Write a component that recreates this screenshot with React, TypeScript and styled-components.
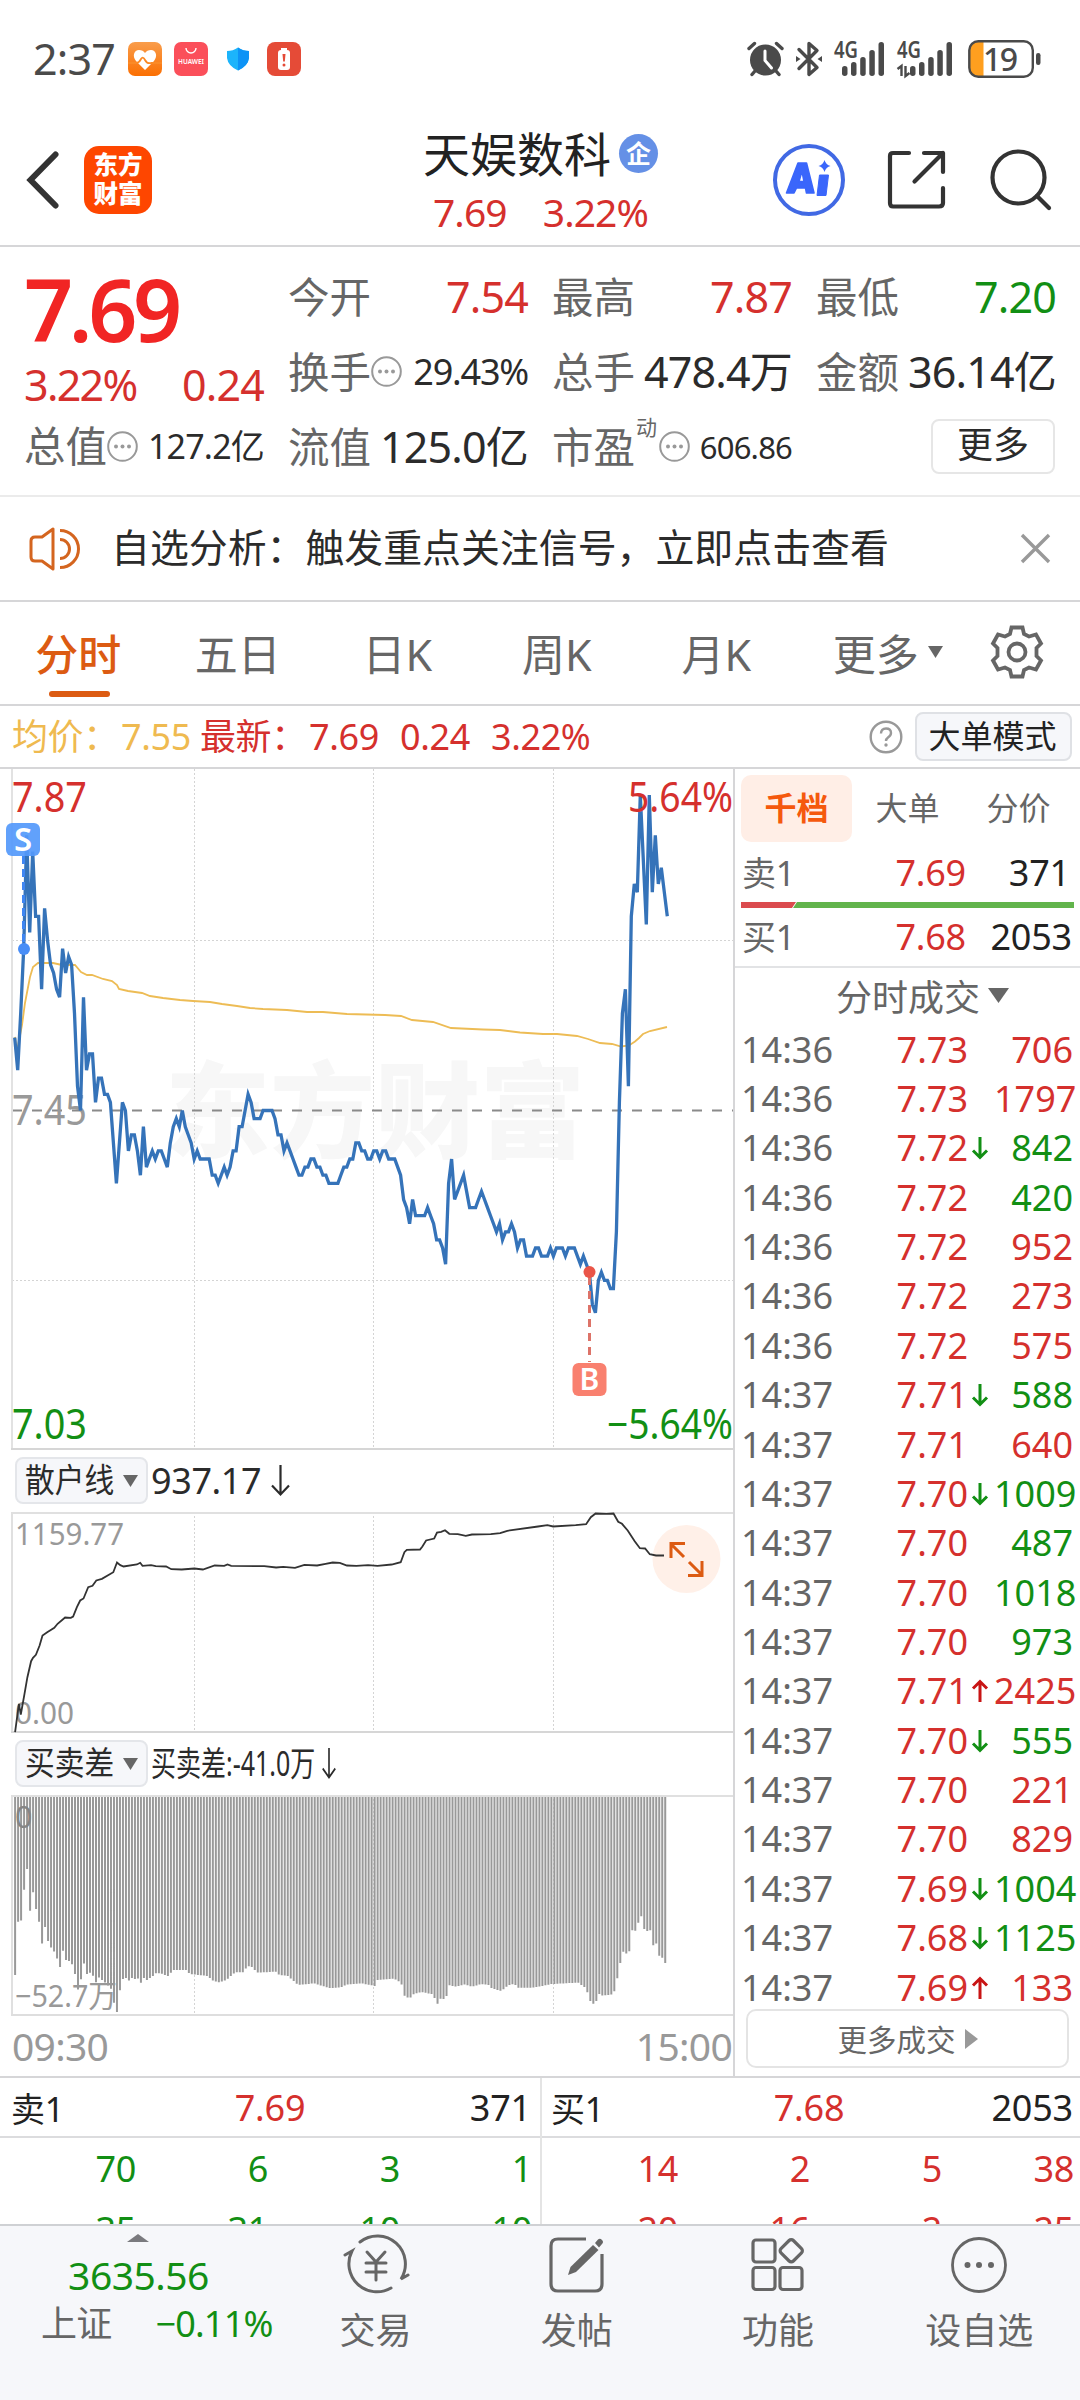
import React from "react";
import styled, { createGlobalStyle } from "styled-components";

const RED = "#d5302d";
const GREEN = "#128f14";
const INK = "#2b2b2b";
const GREY = "#666666";
const MUTE = "#999999";
const LINE = "#d6d6d8";
const BLUE = "#3573b9";
const ORANGE = "#dc5b12";

const FONT = '"Noto Sans", "Noto Sans CJK SC", sans-serif';

const Global = createGlobalStyle`
  * { box-sizing: border-box; }
  html, body { margin: 0; padding: 0; background: #fff; }
  body { font-family: ${FONT}; color: ${INK}; width: 1080px; }
  svg { display: block; flex: none; overflow: visible; }
  svg text { font-family: ${FONT}; }
`;

const Screen = styled.div`
  width: 1080px;
  height: 2400px;
  overflow: hidden;
  display: flex;
  flex-direction: column;
  background: #fff;
  white-space: nowrap;
`;

/* ---------- status bar ---------- */
const StatusBar = styled.div`
  height: 118px;
  flex: none;
  display: flex;
  justify-content: space-between;
  padding: 0 38px 0 33px;
`;
const StatusSide = styled.div<{ $gap: number }>`
  display: flex;
  align-items: center;
  gap: ${(p) => p.$gap}px;
`;
const Clock = styled.span`
  font-size: 43px;
  line-height: 60px;
  letter-spacing: -0.8px;
  color: #4a4a4a;
`;

/* ---------- header ---------- */
const Header = styled.header`
  height: 129px;
  flex: none;
  display: flex;
  border-bottom: 2px solid ${LINE};
  justify-content: space-between;
`;
const HeaderSide = styled.div<{ $w: number }>`
  width: ${(p) => p.$w}px;
  display: flex;
  align-items: center;
  padding-bottom: 4px;
`;
const AppLogo = styled.div`
  width: 68px;
  height: 68px;
  margin-left: 25px;
  border-radius: 15px;
  background: #fe4600;
  color: #fff;
  display: flex;
  flex-direction: column;
  align-items: center;
  justify-content: center;
  font-size: 24.5px;
  font-weight: 900;
  line-height: 29px;
  padding-bottom: 2px;
`;
const TitleBlock = styled.div`
  display: flex;
  flex-direction: column;
  align-items: center;
  width: 240px;
  margin-left: 1px;
`;
const TitleRow = styled.div`
  display: flex;
  align-items: center;
  height: 66px;
  font-size: 47px;
  color: #222;
  gap: 8px;
`;
const Badge = styled.span`
  width: 39px;
  height: 39px;
  border-radius: 50%;
  background: #6590e6;
  color: #fff;
  font-size: 25px;
  font-weight: 700;
  line-height: 38px;
  text-align: center;
  margin-top: 4px;
`;
const TitleQuote = styled.div`
  display: flex;
  gap: 36px;
  font-size: 39px;
  line-height: 56px;
  letter-spacing: -0.9px;
  color: ${RED};
`;

/* ---------- quote summary ---------- */
const Quote = styled.section`
  height: 250px;
  flex: none;
  display: grid;
  grid-template-columns: repeat(4, 240px);
  column-gap: 24px;
  padding: 0 0 0 24px;
  border-bottom: 2px solid #ebebeb;
`;
const QuoteCol = styled.div<{ $top: number }>`
  display: flex;
  flex-direction: column;
  padding-top: ${(p) => p.$top}px;
`;
const Cell = styled.div<{ $h?: number }>`
  height: ${(p) => p.$h ?? 75}px;
  display: flex;
  align-items: center;
  justify-content: space-between;
`;
const Label = styled.span`
  font-size: 41.5px;
  line-height: 60px;
  color: ${GREY};
  display: flex;
  align-items: center;
  padding-bottom: 2px;
`;
const Value = styled.span<{ $c?: string; $s?: number; $ls?: number }>`
  font-size: ${(p) => p.$s ?? 43}px;
  line-height: 60px;
  letter-spacing: ${(p) => p.$ls ?? -0.8}px;
  color: ${(p) => p.$c ?? INK};
  padding-bottom: 2px;
`;
const BigPrice = styled.span`
  font-size: 86px;
  font-weight: 600;
  line-height: 80px;
  letter-spacing: -4.4px;
  color: #f12524;
  padding-bottom: 3px;
`;
const Sup = styled.sup`
  font-size: 21px;
  line-height: 24px;
  align-self: flex-start;
  margin: -2px 2px 0 1px;
`;
const MoreButton = styled.button`
  width: 124px;
  height: 55px;
  margin: 0 1px 2px auto;
  border: 2px solid #e6e6e6;
  border-radius: 8px;
  background: #fff;
  font: 36px/46px ${FONT};
  color: ${INK};
  padding: 0 0 4px;
`;

/* ---------- notice ---------- */
const Notice = styled.div`
  height: 105px;
  flex: none;
  display: flex;
  align-items: center;
  padding: 0 29px;
  border-bottom: 2px solid ${LINE};
  font-size: 38.9px;
`;
const NoticeText = styled.span`
  margin-left: 29px;
  flex: 1;
  line-height: 60px;
  padding-bottom: 4px;
`;

/* ---------- period tabs ---------- */
const Tabs = styled.nav`
  height: 104px;
  flex: none;
  display: grid;
  grid-template-columns: repeat(6, 159.5px) 1fr;
  border-bottom: 2px solid ${LINE};
`;
const Tab = styled.div<{ $on?: boolean; $shift?: number }>`
  position: relative;
  display: flex;
  align-items: center;
  justify-content: center;
  gap: 9px;
  padding: 0 3px 2px ${(p) => p.$shift ?? 0}px;
  font-size: 43px;
  color: ${(p) => (p.$on ? ORANGE : GREY)};
  font-weight: ${(p) => (p.$on ? 500 : 400)};
`;
const Underline = styled.i`
  position: absolute;
  left: 49px;
  bottom: 7px;
  width: 61px;
  height: 6px;
  border-radius: 3px;
  background: ${ORANGE};
`;

/* ---------- price info ---------- */
const Info = styled.div`
  height: 63px;
  flex: none;
  display: flex;
  align-items: center;
  padding: 0 8px 0 12px;
  border-bottom: 2px solid ${LINE};
  font-size: 36px;
`;
const InfoText = styled.span<{ $c: string; $w: number }>`
  color: ${(p) => p.$c};
  width: ${(p) => p.$w}px;
  line-height: 50px;
  letter-spacing: -0.4px;
`;
const ModeButton = styled.button`
  margin-left: 12px;
  width: 157px;
  height: 49px;
  border: 2px solid #dfe1e5;
  border-radius: 8px;
  background: #f6f7fa;
  font: 32px/44px ${FONT};
  color: #222;
  padding: 0 2px 1px 0;
`;

/* ---------- chart + trades ---------- */
const Main = styled.div`
  height: 1309px;
  flex: none;
  display: grid;
  grid-template-columns: 735px 345px;
  border-bottom: 2px solid ${LINE};
`;
const Charts = styled.div`
  border-right: 2px solid ${LINE};
  display: flex;
  flex-direction: column;
`;
const IndicatorRow = styled.div<{ $h: number }>`
  height: ${(p) => p.$h}px;
  flex: none;
  display: flex;
  align-items: center;
  padding: 0 0 2px 15px;
  gap: 3px;
`;
const Picker = styled.div`
  width: 133px;
  height: 47px;
  border: 2px solid #e4e6ea;
  border-radius: 8px;
  background: #f6f7fa;
  display: flex;
  align-items: center;
  justify-content: space-between;
  padding: 0 8px;
`;
const Squeeze = styled.span<{ $k: number; $w: number; $s: number }>`
  display: inline-block;
  width: ${(p) => p.$w}px;
  font-size: ${(p) => p.$s}px;
  line-height: 42px;
  padding-bottom: 2px;
  transform: scaleX(${(p) => p.$k});
  transform-origin: 0 50%;
`;
const IndicatorValue = styled.span`
  font-size: 36px;
  line-height: 44px;
  letter-spacing: -0.4px;
  display: flex;
  align-items: center;
  gap: 10px;
`;
const Axis = styled.div`
  height: 59px;
  flex: none;
  display: flex;
  align-items: center;
  justify-content: space-between;
  padding: 0 1px 2px 12px;
  font-size: 39px;
  letter-spacing: -0.7px;
  color: ${MUTE};
`;

const Trades = styled.div`
  display: flex;
  flex-direction: column;
`;
const BookTabs = styled.div`
  height: 75px;
  display: flex;
  padding: 6px 0 0 6px;
`;
const BookTab = styled.div<{ $on?: boolean }>`
  width: 111px;
  height: 67px;
  border-radius: 10px;
  text-align: center;
  font-size: 32px;
  line-height: 66px;
  font-weight: ${(p) => (p.$on ? 700 : 400)};
  color: ${(p) => (p.$on ? "#f5590d" : GREY)};
  background: ${(p) => (p.$on ? "#ffeee6" : "transparent")};
`;
const BookRow = styled.div<{ $h: number }>`
  height: ${(p) => p.$h}px;
  display: grid;
  grid-template-columns: 130px 102px 1fr;
  align-items: center;
  padding: 0 8px 0 7px;
  font-size: 36px;
  letter-spacing: -0.2px;
  line-height: 44px;
`;
const Cjk = styled.span<{ $c: string }>`
  color: ${(p) => p.$c};
  font-size: 34px;
`;
const Num = styled.span<{ $c: string; $pad?: number; $align?: string }>`
  color: ${(p) => p.$c};
  text-align: ${(p) => p.$align ?? "right"};
  padding-right: ${(p) => p.$pad ?? 0}px;
`;
const TradeTitle = styled.div`
  height: 59px;
  display: flex;
  align-items: center;
  justify-content: center;
  gap: 8px;
  padding: 0 0 3px 30px;
  border-top: 2px solid #e2e3e5;
  font-size: 36px;
  color: ${GREY};
`;
const TradeList = styled.div`
  display: flex;
  flex-direction: column;
`;
const TradeRow = styled.div`
  height: 49.37px;
  display: grid;
  grid-template-columns: 110px 117px 26px 1fr;
  align-items: center;
  padding: 0 7px 0 6px;
  font-size: 36px;
  letter-spacing: 0;
  line-height: 44px;
`;
const MoreTrades = styled.div`
  width: 323px;
  height: 59px;
  margin: -3px 0 0 11px;
  flex: none;
  border: 2px solid #e4e4e4;
  border-radius: 10px;
  background: #fff;
  display: flex;
  align-items: center;
  justify-content: center;
  gap: 9px;
  font-size: 29.5px;
  color: ${GREY};
`;

/* ---------- order queue ---------- */
const Queue = styled.div`
  height: 146px;
  flex: none;
  display: grid;
  grid-template-columns: 540px 540px;
  overflow: hidden;
`;
const QueueSide = styled.div<{ $line?: boolean }>`
  border-left: ${(p) => (p.$line ? "2px solid #e4e4e4" : "none")};
`;
const QueueHead = styled.div<{ $l: number }>`
  height: 60px;
  display: grid;
  grid-template-columns: 180px 1fr 180px;
  align-items: center;
  padding: 0 7px 0 ${(p) => p.$l}px;
  border-bottom: 2px solid #dcdcde;
  font-size: 36px;
  letter-spacing: -0.2px;
`;
const QueueRow = styled.div<{ $c: string }>`
  height: 61px;
  display: grid;
  grid-template-columns: 136px 132px 132px 132px;
  align-items: center;
  text-align: right;
  font-size: 36px;
  letter-spacing: -0.4px;
  color: ${(p) => p.$c};
`;

/* ---------- bottom nav ---------- */
const Nav = styled.footer`
  height: 177px;
  flex: none;
  display: grid;
  grid-template-columns: 275px repeat(4, 201.25px);
  background: #f6f7fa;
  border-top: 2px solid #cfd1d4;
`;
const IndexBox = styled.div`
  display: flex;
  flex-direction: column;
  align-items: center;
  padding-top: 8px;
`;
const IndexValue = styled.div`
  margin-top: 8px;
  padding-left: 2px;
  font-size: 39px;
  line-height: 50px;
  letter-spacing: -0.5px;
  color: ${GREEN};
`;
const IndexRow = styled.div`
  display: flex;
  gap: 44px;
  align-self: flex-start;
  margin: -1px 0 0 41px;
  font-size: 36px;
  line-height: 50px;
  letter-spacing: -0.8px;
  color: ${GREY};
`;
const NavItem = styled.div`
  display: flex;
  flex-direction: column;
  align-items: center;
  padding-top: 8px;
  font-size: 36px;
  line-height: 50px;
  color: ${GREY};
  gap: 10px;
`;

/* ================= data ================= */

/* last price per minute, in cents above the previous close of 7.45 */
const MORNING = [
  9, 5, 12, 20, 34, 22, 32, 24, 24, 15, 25, 21, 18, 17, 15, 14, 20, 17, 19, 18, 12, 3, 0, 14, 5, 7, 7, 1, 4, 4, 2, 2, 1,
  -4, -9, -4, 1, 0, -5, -3, -3, -5, -8, -2, -7, -6, -5, -6, -5, -5, -6, -7, -4, -2, -1, -2, 0, -2, -3, -4, -6, -5, -6,
  -6, -6, -6, -8, -8, -9, -8, -7, -8, -7, -5, -5, -2, -2, 0, 2, 1, -1, -1, -1, 0, 0, 0, 0, -1, -3, -3, -5, -4, -5, -6,
  -7, -8, -8, -7, -7, -6, -6, -7, -7, -8, -8, -9, -9, -9, -9, -8, -7, -7, -6, -6, -4, -4,
];
const AFTERNOON = [
  -5, -5, -6, -6, -5, -5, -6, -5, -5, -6, -6, -6, -7, -8, -11, -12, -14, -11, -13, -13, -13, -13, -12, -13, -14, -16,
  -16, -17, -19, -9, -6, -11, -10, -9, -8, -10, -12, -12, -12, -11, -10, -11, -12, -13, -14, -15, -14, -16, -15, -15,
  -14, -15, -17, -16, -16, -18, -18, -18, -17, -17, -18, -18, -18, -17, -18, -17, -17, -17, -18, -17, -17, -17, -18,
  -19, -18, -19, -20, -24, -25, -21, -20, -21, -21, -22, -22, -15, 1, 12, 15, 3, 24, 28, 27, 39, 31, 23, 39, 27, 34,
  28, 30, 27, 24,
];
const CENT = 8.09;
const MID = 341.5;
const spread = (d: number[], x0: number, x1: number) =>
  d.map((v, i) => `${(x0 + ((x1 - x0) * i) / (d.length - 1)).toFixed(1)},${(MID - v * CENT).toFixed(1)}`).join(" ");
const PRICE_LINE = `${spread(MORNING, 14.7, 358.8)} ${spread(AFTERNOON, 361.7, 667.3)}`;

const AVERAGE: [number, number][] = [
  [15, 268], [17, 282], [22, 256], [25, 234], [30, 208], [33, 198], [38, 194], [53, 194], [62, 196], [75, 196],
  [81, 203], [87, 206], [92, 206], [103, 210], [112, 212], [117, 216], [119, 220], [128, 222], [142, 224], [150, 227],
  [163, 229], [180, 231], [193, 232], [210, 233], [222, 235], [237, 237], [250, 239], [263, 240], [287, 241], [307, 243],
  [323, 243], [347, 245], [385, 246], [401, 247], [412, 251], [433, 253], [451, 259], [483, 260.5], [500, 261], [520, 263.5],
  [543, 265], [557, 265], [577, 267], [588, 270], [600, 274], [612, 275], [621, 277.5], [629, 276.5], [635, 272.5],
  [639, 269], [643, 265], [650, 262], [667, 258],
];

/* retail-flow curve and buy/sell difference share a 740-wide, third-pixel grid */
const RETAIL =
  "32,875 40,790 44,822 52,760 58,710 66,662 70,652 76,643 84,615 90,585 100,575 115,562 122,550 138,531 150,532 155,528 163,500 170,480 177,474 187,440 196,436 204,420 216,415 240,395 248,366 255,374 262,378 290,372 297,367 302,376 320,374 330,377 352,378 363,386 385,387 412,384 430,387 455,375 475,376 482,372 490,376 560,377 585,381 600,379 625,382 645,373 672,375 690,370 705,366 720,367 735,375 755,376 780,374 800,376 830,372 849,365 857,335 862,328 890,327 895,318 903,300 920,294 926,276 935,274 943,269 952,280 970,281 987,286 1000,282 1040,281 1060,278 1075,271 1140,258 1160,254 1172,258 1220,254 1242,251 1252,230 1262,219 1285,220 1300,219 1310,244 1318,250 1330,270 1345,302 1356,323 1367,324 1377,341 1390,345 1407,345"
    .split(" ")
    .map((p) => p.split(",").map(Number))
    .map(([x, y]) => `${(x / 2.119).toFixed(1)},${(y / 3 - 71.5).toFixed(1)}`)
    .join(" ");

const DIFF: [number, number][] = (
  "32,735 38,575 44,582 51,480 57,408 63,549 70,486 76,535 82,567 89,642 95,588 101,630 108,652 114,663 121,686 127,713 133,660 140,690 146,693 152,700 159,732 165,780 171,753 178,700 184,732 190,727 197,737 203,758 209,742 216,750 222,757 228,765 235,775 241,815 247,855 254,782 260,747 267,744 273,752 279,744 286,747 292,745 298,760 305,744 311,750 317,745 324,738 330,730 340,730 356,738 367,720 395,720 402,732 440,738 452,753 465,757 480,750 498,727 515,727 525,708 535,712 545,728 585,725 592,735 610,738 632,765 665,760 700,775 722,772 735,764 765,760 795,768 800,750 835,746 850,758 857,797 868,806 875,793 893,786 918,793 926,824 933,806 945,808 950,765 965,770 985,763 1000,770 1020,762 1035,765 1042,775 1062,783 1078,765 1090,762 1098,773 1130,773 1170,762 1225,758 1242,775 1250,812 1261,826 1268,790 1275,797 1300,793 1306,760 1313,708 1320,665 1325,665 1332,684 1338,600 1345,604 1350,597 1357,545 1363,590 1370,612 1376,576 1382,654 1389,628 1395,677 1401,677 1408,696 1415,709"
    .split(" ")
    .map((p) => p.split(",").map(Number)) as [number, number][]
).map(([x, y]) => [x / 2.119, y / 3 - 65]);

const diffAt = (x: number) => {
  const k = DIFF.findIndex((p) => p[0] >= x);
  if (k <= 0) return DIFF[k === 0 ? 0 : DIFF.length - 1][1];
  const [ax, ay] = DIFF[k - 1];
  const [bx, by] = DIFF[k];
  return ay + ((by - ay) * (x - ax)) / (bx - ax);
};
const BARS = Array.from({ length: 218 }, (_, i) => {
  const x = 15.1 + i * 2.996;
  return `M${x.toFixed(2)} 1V${diffAt(x).toFixed(1)}`;
}).join("");

type Trade = [string, string, "" | "up" | "down", string, string];
const TRADES: Trade[] = [
  ["14:36", "7.73", "", "706", RED],
  ["14:36", "7.73", "", "1797", RED],
  ["14:36", "7.72", "down", "842", GREEN],
  ["14:36", "7.72", "", "420", GREEN],
  ["14:36", "7.72", "", "952", RED],
  ["14:36", "7.72", "", "273", RED],
  ["14:36", "7.72", "", "575", RED],
  ["14:37", "7.71", "down", "588", GREEN],
  ["14:37", "7.71", "", "640", RED],
  ["14:37", "7.70", "down", "1009", GREEN],
  ["14:37", "7.70", "", "487", GREEN],
  ["14:37", "7.70", "", "1018", GREEN],
  ["14:37", "7.70", "", "973", GREEN],
  ["14:37", "7.71", "up", "2425", RED],
  ["14:37", "7.70", "down", "555", GREEN],
  ["14:37", "7.70", "", "221", RED],
  ["14:37", "7.70", "", "829", RED],
  ["14:37", "7.69", "down", "1004", GREEN],
  ["14:37", "7.68", "down", "1125", GREEN],
  ["14:37", "7.69", "up", "133", RED],
];

/* ================= icons ================= */

const Dots = ({ size = 31, color = "#999" }) => (
  <svg width={size} height={size} viewBox="0 0 31 31">
    <circle cx="15.5" cy="15.5" r="14.3" fill="none" stroke={color} strokeWidth="2" />
    <g fill={color}>
      <circle cx="9" cy="15.5" r="2" />
      <circle cx="15.5" cy="15.5" r="2" />
      <circle cx="22" cy="15.5" r="2" />
    </g>
  </svg>
);

const Triangle = ({ w = 15, h = 12, color = GREY }) => (
  <svg width={w} height={h} viewBox="0 0 10 10" preserveAspectRatio="none">
    <path d="M0 0H10L5 10Z" fill={color} />
  </svg>
);

const LongArrow = ({ w = 19 }) => (
  <svg width={w} height="31" viewBox="0 0 19 31" preserveAspectRatio="none">
    <path d="M9.5 0V29M1 20.5L9.5 29.5L18 20.5" fill="none" stroke={INK} strokeWidth="2.2" />
  </svg>
);

const TickSvg = styled.svg`
  margin-left: 2px;
`;
const Tick = ({ dir }: { dir: "" | "up" | "down" }) =>
  dir === "" ? (
    <span />
  ) : (
    <TickSvg width="20" height="24" viewBox="0 0 20 24">
      {dir === "up" ? (
        <path d="M10 23V3M3 9.5L10 2.5L17 9.5" fill="none" stroke="#c81414" strokeWidth="3" />
      ) : (
        <path d="M10 1V21M3 14.5L10 21.5L17 14.5" fill="none" stroke={GREEN} strokeWidth="3" />
      )}
    </TickSvg>
  );

const HealthIcon = () => (
  <svg width="34" height="34" viewBox="0 0 34 34">
    <defs>
      <linearGradient id="hl" x1="0" y1="0" x2="0" y2="1">
        <stop offset="0" stopColor="#f99d4b" />
        <stop offset="1" stopColor="#fb6f02" />
      </linearGradient>
    </defs>
    <rect width="34" height="34" rx="7" fill="url(#hl)" />
    <path d="M17 28L8 19C4 14 6 8 11 8Q15 8 17 11Q19 8 23 8C28 8 30 14 26 19Z" fill="#fff" />
    <path d="M0 21H8Q11 21 13 17Q15 14 17 18Q19 22 23 21L34 21" fill="none" stroke="#fb8a26" strokeWidth="1.8" />
  </svg>
);
const StoreIcon = () => (
  <svg width="34" height="34" viewBox="0 0 34 34">
    <rect width="34" height="34" rx="7" fill="#fb4f5a" />
    <path d="M12 6A5 5 0 0 0 22 6" fill="none" stroke="#fff" strokeWidth="1.4" />
    <text x="4" y="21.5" fontSize="6.2" fontWeight="600" fill="#fff" textLength="26" lengthAdjust="spacingAndGlyphs">
      HUAWEI
    </text>
  </svg>
);
const ShieldIcon = () => (
  <svg width="34" height="34" viewBox="0 0 34 34">
    <path d="M17 5.500Q22 9 28 9V16Q27 24 17 28.500Q7 24 6 16V9Q12 9 17 5.500Z" fill="#1cb4fb" />
    <path d="M17 5.500Q22 9 28 9V16Q27 24 17 28.500Z" fill="#0d93f6" />
  </svg>
);
const LowPowerIcon = () => (
  <svg width="34" height="34" viewBox="0 0 34 34">
    <rect width="34" height="34" rx="8" fill="#e54b37" />
    <rect x="14" y="6" width="6" height="3" fill="#fff" />
    <rect x="11" y="8" width="12" height="20" rx="3" fill="#fff" />
    <path d="M15.500 12H18.500L17.800 19.500H16.200Z" fill="#e54b37" />
    <circle cx="17" cy="23" r="1.500" fill="#e54b37" />
  </svg>
);

const AlarmIcon = () => (
  <svg width="37" height="36" viewBox="0 0 37 36">
    <g stroke="#4a4a4a" strokeWidth="3.400" strokeLinecap="round" fill="none">
      <path d="M2 7.500L7.500 2.500M35 7.500L29.500 2.500M8 30L5 33.500M29 30L32 33.500" />
    </g>
    <circle cx="18.500" cy="19" r="15.500" fill="#4a4a4a" />
    <path d="M18 10V19.500L24.500 27" fill="none" stroke="#fff" strokeWidth="3" strokeLinecap="round" />
  </svg>
);
const BluetoothIcon = () => (
  <svg width="26" height="36" viewBox="0 0 26 36">
    <path
      d="M3 8.500L21 26.500L13 33.500V21M13 15V2.500L21 9.500L3 27.500"
      fill="none"
      stroke="#4a4a4a"
      strokeWidth="3.400"
      strokeLinejoin="round"
      strokeLinecap="round"
    />
    <path d="M0 15L4.500 18L0 21ZM26 15L21.500 18L26 21Z" fill="#4a4a4a" />
  </svg>
);
const Signal = ({ data = false }) => (
  <svg width={data ? 56 : 51} height="36" viewBox={data ? "-5 0 56 36" : "0 0 51 36"}>
    <text x={data ? -5 : 0} y="17" fontSize="22.500" fontWeight="600" fill="#4a4a4a" textLength="24" lengthAdjust="spacingAndGlyphs">
      4G
    </text>
    {[
      [9, 25],
      [18, 21],
      [27.200, 16],
      [36.300, 9],
      [45.500, 1],
    ].map(([x, y]) => (
      <rect key={x} x={x - 1} y={y} width="5.500" height={35 - y} rx="2.700" fill="#4a4a4a" />
    ))}
    {data && <path d="M-4.500 28L-0.500 25V35M3.500 25V35L7.500 32" fill="none" stroke="#4a4a4a" strokeWidth="2.400" />}
  </svg>
);
const BatteryIcon = () => (
  <svg width="74" height="38" viewBox="0 0 74 38">
    <path d="M10 2H15.500V36H10Q2 36 2 28V10Q2 2 10 2Z" fill="#ff9f1f" />
    <rect x="1.300" y="1.300" width="63.500" height="35.400" rx="9" fill="none" stroke="#4a4a4a" strokeWidth="2.400" />
    <rect x="68" y="13" width="4.500" height="12" rx="2.200" fill="#4a4a4a" />
    <text x="15" y="30.500" fontSize="32" fill="#4a4a4a" fontWeight="500" textLength="35">
      19
    </text>
  </svg>
);

const BackSvg = styled.svg`
  margin-left: 27px;
`;
const BackIcon = () => (
  <BackSvg width="32" height="58" viewBox="0 0 32 58">
    <path d="M28.500 3.500L3.500 29L28.500 54.500" fill="none" stroke="#333" strokeWidth="6" strokeLinecap="round" />
  </BackSvg>
);
const ActionSvg = styled.svg<{ $l: number }>`
  margin-left: ${(p) => p.$l}px;
`;
const AiIcon = () => (
  <ActionSvg $l={2} width="74" height="74" viewBox="0 0 74 74">
    <circle cx="37" cy="37" r="34" fill="none" stroke="#4169e4" strokeWidth="4" />
    <path
      d="M26 20H34.500L42 50H34.500L33.500 45H24.500L22 50H14.500ZM30 28L27 38.500H32Z"
      fill="#3a66fb"
      fillRule="evenodd"
      stroke="#3a66fb"
      strokeWidth="1.600"
      strokeLinejoin="round"
    />
    <path d="M47.500 32H56.500L54 52.500H45Z" fill="#3a66fb" stroke="#3a66fb" strokeLinejoin="round" />
    <path d="M52.500 17Q54 22 58.500 23Q54 24 52.500 29Q51 24 46.500 23Q51 22 52.500 17Z" fill="#3a66fb" />
  </ActionSvg>
);
const ShareIcon = () => (
  <ActionSvg $l={41} width="60" height="60" viewBox="0 0 60 60">
    <path
      d="M22 3H6Q3 3 3 6V53Q3 56.500 6 56.500H52Q56 56.500 56 53V38M37 3H56V22M56 3L27.500 31.500"
      fill="none"
      stroke="#333"
      strokeWidth="4.200"
      strokeLinecap="round"
      strokeLinejoin="round"
    />
  </ActionSvg>
);
const SearchIcon = () => (
  <ActionSvg $l={43} width="62" height="62" viewBox="0 0 62 62">
    <circle cx="28.500" cy="28.500" r="26" fill="none" stroke="#333" strokeWidth="4.200" />
    <path d="M47 47L59 59" stroke="#333" strokeWidth="4.200" strokeLinecap="round" />
  </ActionSvg>
);

const SpeakerIcon = () => (
  <svg width="53" height="44" viewBox="0 0 53 44">
    <g fill="none" stroke="#d4651f" strokeWidth="3" strokeLinejoin="round">
      <path d="M24 2V42L13 34H6Q2 34 2 30V14Q2 10 6 10H13Z" />
      <path d="M31 12.500A9.500 9.500 0 0 1 31 31.500M31 3.500A18.500 18.500 0 0 1 31 40.500" />
    </g>
  </svg>
);
const CloseIcon = () => (
  <svg width="31" height="31" viewBox="0 0 31 31">
    <path d="M2 2L29 29M29 2L2 29" stroke="#999" strokeWidth="3.400" />
  </svg>
);
const GearIcon = () => (
  <svg width="52" height="54" viewBox="-26 -27 52 54">
    <path
      d="M-5.500 -24.500H5.500L7 -18L12 -15.500L19 -17.500L24 -8.500L19.500 -4V4L24 8.500L19 17.500L12 15.500L7 18L5.500 24.500H-5.500L-7 18L-12 15.500L-19 17.500L-24 8.500L-19.500 4V-4L-24 -8.500L-19 -17.500L-12 -15.500L-7 -18Z"
      fill="none"
      stroke={GREY}
      strokeWidth="3.800"
    />
    <circle r="8.500" fill="none" stroke={GREY} strokeWidth="3.800" />
  </svg>
);
const HelpSvg = styled.svg`
  margin-left: auto;
`;
const HelpIcon = () => (
  <HelpSvg width="34" height="34" viewBox="0 0 34 34">
    <circle cx="17" cy="17" r="15.300" fill="none" stroke="#999" strokeWidth="2.400" />
    <path d="M12 13.500Q12 8.500 17 8.500Q22 8.500 22 13Q22 15.500 19 17.500Q17 19 17 21" fill="none" stroke="#999" strokeWidth="2.400" />
    <circle cx="17" cy="25" r="1.700" fill="#999" />
  </HelpSvg>
);

const TradeNavIcon = () => (
  <svg width="68" height="62" viewBox="0 0 68 62">
    <g fill="none" stroke={GREY} strokeWidth="3" strokeLinecap="round">
      <path d="M18 8A28 28 0 0 1 59 45L66 41M49 54A28 28 0 0 1 10 17L3 21" />
      <path d="M25 18L34 28L43 18M24 29H44M24 38H44M34 28V46" />
    </g>
  </svg>
);
const PostNavIcon = () => (
  <svg width="58" height="62" viewBox="0 0 58 62">
    <path d="M38 5H10Q3 5 3 12V50Q3 57 10 57H47Q54 57 54 50V20" fill="none" stroke={GREY} strokeWidth="3.200" />
    <path d="M45 11L50.500 16L28 38L20 41L22.500 33Z" fill={GREY} />
    <path d="M47 9L50 5.500Q52 4 54 6Q56 8 54 10L51 13.500Z" fill={GREY} />
  </svg>
);
const AppsNavIcon = () => (
  <svg width="58" height="62" viewBox="0 0 58 62">
    <g fill="none" stroke={GREY} strokeWidth="3.200">
      <rect x="4" y="6" width="22" height="22" rx="3" />
      <rect x="4" y="33.500" width="22" height="22" rx="3" />
      <rect x="31" y="33.500" width="22" height="22" rx="3" />
      <rect x="33.500" y="8" width="17.500" height="17.500" rx="3" transform="rotate(45 42.250 16.750)" />
    </g>
  </svg>
);
const MoreNavIcon = () => (
  <svg width="58" height="62" viewBox="0 0 58 62">
    <circle cx="29" cy="31" r="26.500" fill="none" stroke={GREY} strokeWidth="2.800" />
    <g fill={GREY}>
      <circle cx="17.500" cy="31" r="3" />
      <circle cx="29" cy="31" r="3" />
      <circle cx="41" cy="31" r="3" />
    </g>
  </svg>
);

/* ================= charts ================= */

const VGrid = ({ h }: { h: number }) => (
  <g stroke="#d4d4d4" strokeDasharray="2 2">
    <path d={`M194.500 0V${h}M373.500 0V${h}M553.500 0V${h}`} />
  </g>
);

const PriceChart = () => (
  <svg width="733" height="682" viewBox="0 0 733 682">
    <text x="165" y="381" fontSize="104" fontWeight="900" fill="#f7f7f7" textLength="420" lengthAdjust="spacingAndGlyphs">
      东方财富
    </text>
    <VGrid h={680} />
    <path d="M12 171.500H733M12 511.500H733" stroke="#d4d4d4" strokeDasharray="2 2" />
    <path d="M12 341.500H733" stroke="#8a8a8a" strokeWidth="1.800" strokeDasharray="10 10" />
    <path d="M12 0V681" stroke="#e2e2e2" strokeWidth="2" />
    <path d="M11 680H733" stroke="#d6d6d6" strokeWidth="2" />
    <text x="12" y="356" fontSize="41" fill={MUTE} textLength="75" lengthAdjust="spacingAndGlyphs">
      7.45
    </text>
    <polyline points={AVERAGE.map((p) => p.join(",")).join(" ")} fill="none" stroke="#edbc55" strokeWidth="1.800" />
    <polyline points={PRICE_LINE} fill="none" stroke={BLUE} strokeWidth="3.300" />
    <text x="12" y="43" fontSize="41" fill={RED} textLength="75" lengthAdjust="spacingAndGlyphs">
      7.87
    </text>
    <text x="628" y="43" fontSize="41" fill={RED} textLength="105" lengthAdjust="spacingAndGlyphs">
      5.64%
    </text>
    <text x="12" y="670" fontSize="41" fill={GREEN} textLength="75" lengthAdjust="spacingAndGlyphs">
      7.03
    </text>
    <text x="607" y="670" fontSize="41" fill={GREEN} textLength="126" lengthAdjust="spacingAndGlyphs">
      −5.64%
    </text>
    <path d="M23.500 87V176" stroke="#3f86f2" strokeWidth="3" strokeDasharray="8 5" />
    <circle cx="24" cy="180" r="6" fill="#478df7" />
    <rect x="6" y="54" width="34" height="33" rx="6" fill="#5499fb" fillOpacity="0.92" />
    <text x="23" y="82" fontSize="33" fontWeight="600" fill="#fff" textAnchor="middle">
      S
    </text>
    <path d="M589.500 508V593" stroke="#dd7368" strokeWidth="3" strokeDasharray="8 6" />
    <circle cx="589.500" cy="503" r="6" fill="#ea5548" />
    <rect x="572.500" y="594" width="34" height="33" rx="6" fill="#f9806f" />
    <text x="589.500" y="621" fontSize="30" fontWeight="600" fill="#fff" textAnchor="middle">
      B
    </text>
  </svg>
);

const RetailChart = () => (
  <svg width="733" height="222" viewBox="0 0 733 222">
    <VGrid h={220} />
    <path d="M12 221V1H733" fill="none" stroke="#e0e0e0" strokeWidth="2" />
    <path d="M11 220H733" stroke="#d6d6d6" strokeWidth="2" />
    <text x="15" y="33" fontSize="30.500" fill={MUTE} textLength="109" lengthAdjust="spacingAndGlyphs">
      1159.77
    </text>
    <text x="15" y="212" fontSize="30.500" fill={MUTE} textLength="59" lengthAdjust="spacingAndGlyphs">
      0.00
    </text>
    <circle cx="686.500" cy="47" r="34" fill="#fff0e8" />
    <polyline points={RETAIL} fill="none" stroke="#333" strokeWidth="1.800" />
    <path d="M684 45L671 32M671 46V31.500H685M689 50L702 63M702 49V63.500H688" fill="none" stroke={ORANGE} strokeWidth="3" />
  </svg>
);

const DiffChart = () => (
  <svg width="733" height="222" viewBox="0 0 733 222">
    <VGrid h={220} />
    <path d={BARS} stroke="#999" strokeWidth="2" fill="none" />
    <path d="M12 221V1H733" fill="none" stroke="#e0e0e0" strokeWidth="2" />
    <path d="M11 220H733" stroke="#dedede" strokeWidth="2" />
    <text x="15" y="33" fontSize="30.500" fill="#858585">
      0
    </text>
    <text x="15" y="212" fontSize="30.500" fill={MUTE} textLength="102" lengthAdjust="spacingAndGlyphs">
      −52.7万
    </text>
  </svg>
);

/* ================= page ================= */

export default function App() {
  return (
    <Screen>
      <Global />
      <StatusBar>
        <StatusSide $gap={12.5}>
          <Clock>2:37</Clock>
          <HealthIcon />
          <StoreIcon />
          <ShieldIcon />
          <LowPowerIcon />
        </StatusSide>
        <StatusSide $gap={12}>
          <AlarmIcon />
          <BluetoothIcon />
          <Signal />
          <Signal data />
          <ActionSvg $l={3} width="74" height="38">
            <BatteryIcon />
          </ActionSvg>
        </StatusSide>
      </StatusBar>

      <Header>
        <HeaderSide $w={310}>
          <BackIcon />
          <AppLogo>
            <span>东方</span>
            <span>财富</span>
          </AppLogo>
        </HeaderSide>
        <TitleBlock>
          <TitleRow>
            天娱数科<Badge>企</Badge>
          </TitleRow>
          <TitleQuote>
            <span>7.69</span>
            <span>3.22%</span>
          </TitleQuote>
        </TitleBlock>
        <HeaderSide $w={310}>
          <AiIcon />
          <ShareIcon />
          <SearchIcon />
        </HeaderSide>
      </Header>

      <Quote>
        <QuoteCol $top={23}>
          <Cell $h={80}>
            <BigPrice>7.69</BigPrice>
          </Cell>
          <Cell $h={71}>
            <Value $c={RED} $ls={-1.7}>3.22%</Value>
            <Value $c={RED}>0.24</Value>
          </Cell>
          <Cell $h={52}>
            <Label>
              总值
              <Dots />
            </Label>
            <Value $s={34}>127.2亿</Value>
          </Cell>
        </QuoteCol>
        <QuoteCol $top={13}>
          <Cell>
            <Label>今开</Label>
            <Value $c={RED}>7.54</Value>
          </Cell>
          <Cell>
            <Label>
              换手
              <Dots />
            </Label>
            <Value $s={36} $ls={-1.2}>29.43%</Value>
          </Cell>
          <Cell>
            <Label>流值</Label>
            <Value>125.0亿</Value>
          </Cell>
        </QuoteCol>
        <QuoteCol $top={13}>
          <Cell>
            <Label>最高</Label>
            <Value $c={RED}>7.87</Value>
          </Cell>
          <Cell>
            <Label>总手</Label>
            <Value>478.4万</Value>
          </Cell>
          <Cell>
            <Label>
              市盈<Sup>动</Sup>
              <Dots />
            </Label>
            <Value $s={31}>606.86</Value>
          </Cell>
        </QuoteCol>
        <QuoteCol $top={13}>
          <Cell>
            <Label>最低</Label>
            <Value $c={GREEN}>7.20</Value>
          </Cell>
          <Cell>
            <Label>金额</Label>
            <Value>36.14亿</Value>
          </Cell>
          <Cell>
            <MoreButton>更多</MoreButton>
          </Cell>
        </QuoteCol>
      </Quote>

      <Notice>
        <SpeakerIcon />
        <NoticeText>自选分析：触发重点关注信号，立即点击查看</NoticeText>
        <CloseIcon />
      </Notice>

      <Tabs>
        <Tab $on>
          分时
          <Underline />
        </Tab>
        <Tab>五日</Tab>
        <Tab>日K</Tab>
        <Tab>周K</Tab>
        <Tab>月K</Tab>
        <Tab $shift={24}>
          更多
          <Triangle w={15} h={12} />
        </Tab>
        <Tab>
          <GearIcon />
        </Tab>
      </Tabs>

      <Info>
        <InfoText $c="#efba50" $w={109}>均价：</InfoText>
        <InfoText $c="#efba50" $w={79}>7.55</InfoText>
        <InfoText $c={RED} $w={109}>最新：</InfoText>
        <InfoText $c={RED} $w={91}>7.69</InfoText>
        <InfoText $c={RED} $w={91}>0.24</InfoText>
        <InfoText $c={RED} $w={110}>3.22%</InfoText>
        <HelpIcon />
        <ModeButton>大单模式</ModeButton>
      </Info>

      <Main>
        <Charts>
          <PriceChart />
          <IndicatorRow $h={61}>
            <Picker>
              <Squeeze $k={0.9} $w={90} $s={33}>散户线</Squeeze>
              <Triangle w={15} h={12} />
            </Picker>
            <IndicatorValue>
              937.17
              <LongArrow />
            </IndicatorValue>
          </IndicatorRow>
          <RetailChart />
          <IndicatorRow $h={61}>
            <Picker>
              <Squeeze $k={0.9} $w={90} $s={33}>买卖差</Squeeze>
              <Triangle w={15} h={12} />
            </Picker>
            <Squeeze $k={0.735} $w={168} $s={34}>买卖差:-41.0万</Squeeze>
            <LongArrow w={14} />
          </IndicatorRow>
          <DiffChart />
          <Axis>
            <span>09:30</span>
            <span>15:00</span>
          </Axis>
        </Charts>

        <Trades>
          <BookTabs>
            <BookTab $on>千档</BookTab>
            <BookTab>大单</BookTab>
            <BookTab>分价</BookTab>
          </BookTabs>
          <BookRow $h={58}>
            <Cjk $c={GREY}>卖1</Cjk>
            <Num $c={RED} $pad={8}>7.69</Num>
            <Num $c="#222" $pad={2}>371</Num>
          </BookRow>
          <svg width="345" height="6" viewBox="0 0 345 6">
            <path d="M6 0H61L57 6H6Z" fill="#db4b4e" />
            <path d="M62 0H339V6H58Z" fill="#62b44c" />
          </svg>
          <BookRow $h={58}>
            <Cjk $c={GREY}>买1</Cjk>
            <Num $c={RED} $pad={8}>7.68</Num>
            <Num $c="#222">2053</Num>
          </BookRow>
          <TradeTitle>
            分时成交
            <Triangle w={21} h={15} />
          </TradeTitle>
          <TradeList>
            {TRADES.map(([time, price, dir, vol, color], i) => (
              <TradeRow key={i}>
                <Num $c={GREY} $align="left">
                  {time}
                </Num>
                <Num $c={RED}>{price}</Num>
                <Tick dir={dir} />
                <Num $c={color}>{vol}</Num>
              </TradeRow>
            ))}
          </TradeList>
          <MoreTrades>
            更多成交
            <svg width="13" height="20" viewBox="0 0 13 20">
              <path d="M0 0L13 10L0 20Z" fill="#999" />
            </svg>
          </MoreTrades>
        </Trades>
      </Main>

      <Queue>
        <QueueSide>
          <QueueHead $l={11}>
            <Cjk $c="#222">卖1</Cjk>
            <Num $c={RED} $pad={4} $align="center">7.69</Num>
            <Num $c="#222" $pad={2}>371</Num>
          </QueueHead>
          <QueueRow $c={GREEN}>
            <span>70</span>
            <span>6</span>
            <span>3</span>
            <span>1</span>
          </QueueRow>
          <QueueRow $c={GREEN}>
            <span>35</span>
            <span>31</span>
            <span>10</span>
            <span>10</span>
          </QueueRow>
        </QueueSide>
        <QueueSide $line>
          <QueueHead $l={9}>
            <Cjk $c="#222">买1</Cjk>
            <Num $c={RED} $pad={6} $align="center">7.68</Num>
            <Num $c="#222">2053</Num>
          </QueueHead>
          <QueueRow $c={RED}>
            <span>14</span>
            <span>2</span>
            <span>5</span>
            <span>38</span>
          </QueueRow>
          <QueueRow $c={RED}>
            <span>20</span>
            <span>16</span>
            <span>2</span>
            <span>25</span>
          </QueueRow>
        </QueueSide>
      </Queue>

      <Nav>
        <IndexBox>
          <svg width="22" height="8" viewBox="0 0 22 8">
            <path d="M0 8L11 0L22 8Z" fill="#7a7a7e" />
          </svg>
          <IndexValue>3635.56</IndexValue>
          <IndexRow>
            上证<Num $c={GREEN}>−0.11%</Num>
          </IndexRow>
        </IndexBox>
        <NavItem>
          <TradeNavIcon />
          交易
        </NavItem>
        <NavItem>
          <PostNavIcon />
          发帖
        </NavItem>
        <NavItem>
          <AppsNavIcon />
          功能
        </NavItem>
        <NavItem>
          <MoreNavIcon />
          设自选
        </NavItem>
      </Nav>
    </Screen>
  );
}
